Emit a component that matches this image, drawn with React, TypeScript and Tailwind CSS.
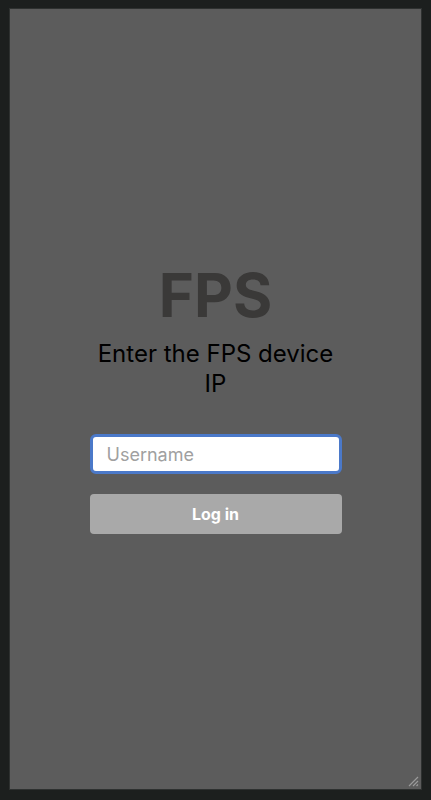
import { useEffect, useRef } from 'react'

const ResizeGrip = () => (
  <svg width="12" height="12" viewBox="0 0 12 12" className="absolute bottom-0.5 right-0.5">
    <path d="M11 2 L2 11 M11 6 L6 11 M11 9.5 L9.5 11" stroke="#9a9a9a" strokeWidth="1.2" />
  </svg>
)

const App = () => {
  const inputRef = useRef<HTMLInputElement>(null)

  useEffect(() => {
    inputRef.current?.focus()
  }, [])

  return (
    <div className="h-[800px] w-full bg-[#1c1f1e] pt-2 pl-[9px] pr-[9px] pb-[10px]" style={{ fontFamily: 'Inter, "Noto Sans", sans-serif' }}>
      <div className="relative h-full border border-[#2e3130] bg-[#5c5c5c] flex flex-col items-center justify-center">
        <div className="w-[252px] pb-[5px] flex flex-col items-center">
          <h1 className="mb-[8px] text-[60px] font-bold leading-[72px] text-[#3a3938]">FPS</h1>
          <p className="text-center text-[24px] leading-[30px] text-black">Enter the FPS device IP</p>

          <form className="mt-[35px] w-full flex flex-col gap-[20px]" onSubmit={(e) => e.preventDefault()}>
            <input
              ref={inputRef}
              type="text"
              placeholder="Username"
              className="h-10 w-full rounded-md border-[3px] border-[#4b79c9] bg-white px-[14px] text-[18px] text-gray-800 caret-black placeholder-[#a0a0a0] outline-none"
            />
            <button
              type="submit"
              className="h-10 w-full rounded bg-[#a9a9a9] text-[16px] font-bold text-white"
            >
              Log in
            </button>
          </form>
        </div>
        <ResizeGrip />
      </div>
    </div>
  )
}

export default App
